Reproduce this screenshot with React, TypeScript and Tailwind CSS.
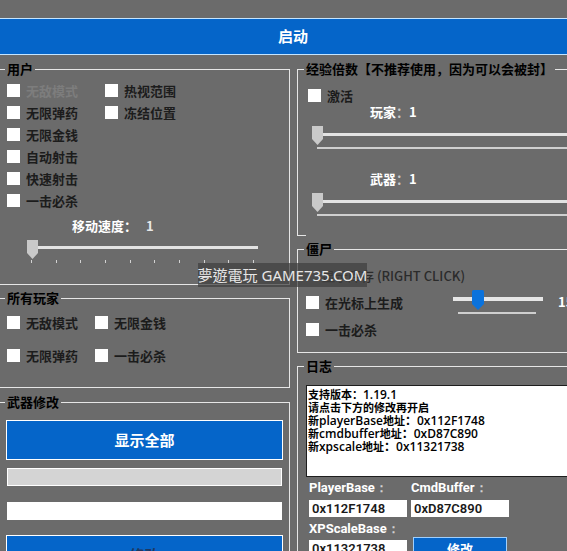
import React from 'react';

const Check = ({ label, dim }: { label: string; dim?: boolean }) => (
  <div className="flex h-full items-center">
    <span className="h-[13px] w-[13px] shrink-0 bg-white" />
    <span
      className={`ml-[6px] whitespace-nowrap text-[13px] font-bold leading-none ${
        dim ? 'text-[#7d7d7d]' : 'text-[#1c1c1c]'
      }`}
    >
      {label}
    </span>
  </div>
);

const Thumb = () => (
  <svg width="11" height="19" viewBox="0 0 11 19" className="absolute left-0 top-0">
    <path d="M0 0H11V13L5.5 19L0 13Z" fill="#c9c9c9" />
  </svg>
);

const WideSlider = () => (
  <div className="relative ml-[8px] mt-[7px] h-[24px] w-[270px]">
    <div className="absolute left-[11px] right-0 top-[7px] h-[3px] bg-[#e3e3e3]" />
    <div className="absolute left-[5px] right-0 top-[21px] h-[2px] bg-[#cfcfcf]" />
    <Thumb />
  </div>
);

const Legend = ({ children }: { children: React.ReactNode }) => (
  <legend className="px-[2px] text-[13px] font-bold leading-[16px] text-black">{children}</legend>
);

export default function App() {
  return (
    <div className="relative h-[551px] w-[567px] overflow-hidden bg-[#6b6b6b] font-[family-name:'Noto_Sans_CJK_SC','Noto_Sans',sans-serif]">
      <div className="pt-[18px]">
        {/* top start button */}
        <div className="flex h-[37px] w-[586px] items-center justify-center border-y border-[#c4e4ff] bg-[#0565c9]">
          <span className="text-[15px] font-bold text-white">启动</span>
        </div>

        <div className="mt-[6px] flex items-start">
          {/* left column */}
          <div className="flex w-[290px] shrink-0 flex-col">
            <fieldset className="h-[224px] border border-l-0 border-[#e6e6e6] pl-[5px]">
              <Legend>用户</Legend>
              <div className="ml-[2px] flex pt-[2px]">
                <div className="w-[98px]">
                  <div className="h-[22px]"><Check label="无敌模式" dim /></div>
                  <div className="h-[22px]"><Check label="无限弹药" /></div>
                  <div className="h-[22px]"><Check label="无限金钱" /></div>
                  <div className="h-[22px]"><Check label="自动射击" /></div>
                  <div className="h-[22px]"><Check label="快速射击" /></div>
                  <div className="h-[22px]"><Check label="一击必杀" /></div>
                </div>
                <div>
                  <div className="h-[22px]"><Check label="热视范围" /></div>
                  <div className="h-[22px]"><Check label="冻结位置" /></div>
                </div>
              </div>
              <div className="ml-[67px] mt-[7px] flex h-[16px] items-center text-[13px] font-bold text-white">
                <span>移动速度：</span>
                <span className="ml-[9px] text-[#e8e8e8]">1</span>
              </div>
              <div className="relative ml-[22px] mt-[6px] h-[24px] w-[231px]">
                <div className="absolute left-[10px] right-0 top-[6px] h-[3px] bg-[#e3e3e3]" />
                <Thumb />
                <div className="absolute left-[4px] top-[20px] flex w-[223px] justify-between">
                  {Array.from({ length: 10 }).map((_, i) => (
                    <span key={i} className="h-[3px] w-px bg-[#d2d2d2]" />
                  ))}
                </div>
              </div>
            </fieldset>

            <fieldset className="mt-[5px] h-[98px] border border-l-0 border-[#e6e6e6] pl-[5px]">
              <Legend>所有玩家</Legend>
              <div className="ml-[2px] grid grid-cols-[88px_1fr] pt-[5px]">
                <div className="h-[22px]"><Check label="无敌模式" /></div>
                <div className="h-[22px]"><Check label="无限金钱" /></div>
                <div className="mt-[11px] h-[22px]"><Check label="无限弹药" /></div>
                <div className="mt-[11px] h-[22px]"><Check label="一击必杀" /></div>
              </div>
            </fieldset>

            <fieldset className="mt-[6px] h-[200px] border border-l-0 border-[#e6e6e6] pl-[5px]">
              <Legend>武器修改</Legend>
              <div className="ml-[1px] mt-[10px] flex h-[40px] w-[277px] items-center justify-center border border-white bg-[#0565c9] text-[15px] font-bold text-white">
                显示全部
              </div>
              <div className="ml-[2px] mt-[8px] h-[18px] w-[275px] border border-white bg-[#d4d4d4]" />
              <div className="ml-[2px] mt-[16px] h-[18px] w-[275px] bg-white" />
              <div className="ml-[1px] mt-[15px] flex h-[40px] w-[277px] items-start justify-center border border-white bg-[#0565c9] pt-[8px] text-[15px] font-bold text-[#1f3760]">
                修改
              </div>
            </fieldset>
          </div>

          {/* right column */}
          <div className="ml-[7px] flex w-[300px] shrink-0 flex-col">
            <fieldset className="h-[174px] border-l border-t border-[#e6e6e6] pl-[6px]">
              <Legend>经验倍数【不推荐使用，因为可以会被封】</Legend>
              <div className="ml-[4px] mt-[8px] h-[20px]"><Check label="激活" /></div>
              <div className="ml-[66px] flex h-[14px] items-center text-[13px] font-bold text-white">
                玩家<span className="text-[#c8c8c8]">：</span>1
              </div>
              <WideSlider />
              <div className="ml-[66px] mt-[22px] flex h-[14px] items-center text-[13px] font-bold text-white">
                武器<span className="text-[#c8c8c8]">：</span>1
              </div>
              <WideSlider />
            </fieldset>
            <div className="h-px w-[9px] bg-[#e6e6e6]" />

            <fieldset className="mt-[5px] h-[112px] border border-[#e6e6e6] pl-[6px]">
              <Legend>僵尸</Legend>
              <div className="ml-[18px] mt-[6px] flex h-[26px] items-center whitespace-nowrap text-[13px] font-medium text-[#2b2b2b]">
                显示库存 (RIGHT CLICK)
              </div>
              <div className="ml-[2px] flex h-[26px] items-center">
                <div className="h-full w-[147px]"><Check label="在光标上生成" /></div>
                <div className="relative h-[24px] w-[90px]">
                  <div className="absolute left-0 right-0 top-[7px] h-[4px] bg-[#e6e6e6]" />
                  <div className="absolute left-[5px] top-[22px] h-[2px] w-[78px] bg-[#cfcfcf]" />
                  <svg width="12" height="20" viewBox="0 0 12 20" className="absolute left-[19px] top-0">
                    <path d="M1.5 0H10.5Q12 0 12 1.5V14L6 20L0 14V1.5Q0 0 1.5 0Z" fill="#0a72dc" />
                  </svg>
                </div>
                <span className="ml-[15px] text-[13px] font-bold text-white">15</span>
              </div>
              <div className="ml-[2px] h-[28px]"><Check label="一击必杀" /></div>
            </fieldset>

            <fieldset className="mt-[5px] h-[240px] border border-[#e6e6e6] pl-[6px]">
              <Legend>日志</Legend>
              <div className="ml-[2px] mt-[11px] h-[92px] w-[280px] border border-[#1e1e1e] bg-white pl-[1px] pt-[2px] font-[family-name:'Open_Sans','Noto_Sans_CJK_SC',sans-serif] text-[12px] font-semibold leading-[13px] text-black">
                <div className="h-[13px] whitespace-nowrap"><span className="text-[11px] font-bold">支持版本：</span>1.19.1</div>
                <div className="h-[13px] whitespace-nowrap text-[11px] font-bold">请点击下方的修改再开启</div>
                <div className="h-[13px] whitespace-nowrap"><span className="text-[11px] font-bold">新</span>playerBase<span className="text-[11px] font-bold">地址</span>：0x112F1748</div>
                <div className="h-[13px] whitespace-nowrap"><span className="text-[11px] font-bold">新</span>cmdbuffer<span className="text-[11px] font-bold">地址</span>：0xD87C890</div>
                <div className="h-[13px] whitespace-nowrap"><span className="text-[11px] font-bold">新</span>xpscale<span className="text-[11px] font-bold">地址</span>：0x11321738</div>
              </div>
              <div className="ml-[5px] mt-[2px] grid grid-cols-[98px_98px] gap-x-[4px] font-[family-name:Roboto,'Noto_Sans',sans-serif]">
                <div className="flex h-[18px] items-center text-[13px] font-bold text-white">PlayerBase<span className="text-[#d0d0d0]">：</span></div>
                <div className="flex h-[18px] items-center text-[13px] font-bold text-white">CmdBuffer<span className="text-[#d0d0d0]">：</span></div>
                <div className="mt-[3px] flex h-[17px] items-center bg-white pl-[3px] text-[13px] font-semibold text-[#1a1a1a]">0x112F1748</div>
                <div className="mt-[3px] flex h-[17px] items-center bg-white pl-[3px] text-[13px] font-semibold text-[#1a1a1a]">0xD87C890</div>
                <div className="col-span-2 mt-[3px] flex h-[18px] items-center text-[13px] font-bold text-white">XPScaleBase<span className="text-[#d0d0d0]">：</span></div>
                <div className="mt-[2px] flex h-[17px] items-center bg-white pl-[3px] text-[13px] font-semibold text-[#1a1a1a]">0x11321738</div>
                <div className="-mt-[1px] ml-[2px] flex h-[24px] w-[94px] items-start justify-center border border-[#9fd0ff] bg-[#0565c9] pt-[1px] font-[family-name:'Noto_Sans_CJK_SC',sans-serif] text-[13px] font-bold text-white">修改</div>
              </div>
            </fieldset>
          </div>
        </div>
      </div>

      {/* site watermark over the page */}
      <div className="absolute left-[198px] top-[263px] flex h-[24px] w-[169px] items-center justify-center whitespace-nowrap bg-[rgba(62,62,62,0.72)] font-[family-name:'Noto_Sans','Noto_Sans_CJK_TC',sans-serif] text-[15px] leading-none text-[#e6e6e6]">
        夢遊電玩 GAME735.COM
      </div>
    </div>
  );
}
